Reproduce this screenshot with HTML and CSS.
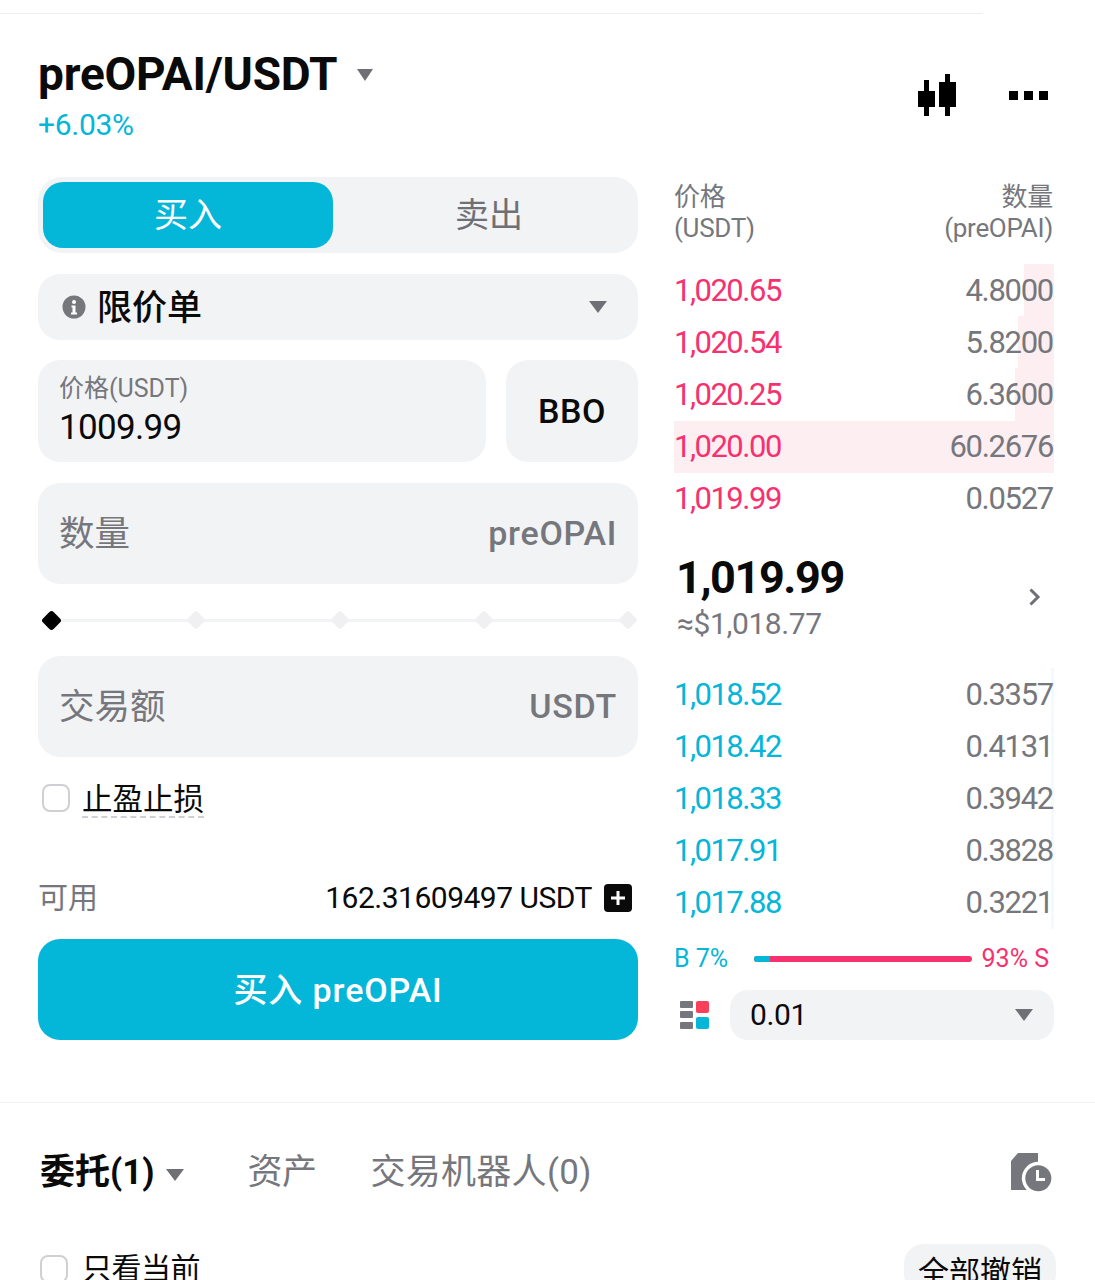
FILE: index.html
```html
<!DOCTYPE html>
<html lang="zh-CN">
<head>
<meta charset="utf-8">
<title>preOPAI/USDT</title>
<link rel="stylesheet" href="styles.css">
</head>
<body>
<div class="page">
  <div class="top-rule"></div>
  <header class="head">
    <div class="pair">
      <div class="pair-line">
        <h1 class="pair-name">preOPAI/USDT</h1>
        <span class="caret caret-title"></span>
      </div>
      <div class="change">+6.03%</div>
    </div>
    <div class="head-icons">
      <svg class="candle" width="38" height="44" viewBox="0 0 38 44"><path d="M6 7h5v11h6v16h-6v9H6v-9H0V18h6zM27 1h5v8h6v25h-6v9h-5v-9h-6V9h6z" fill="#000"/></svg>
      <svg class="dots" width="40" height="9" viewBox="0 0 40 9"><path d="M0 0h9v9H0zM15 0h9v9h-9zM30 0h9v9h-9z" fill="#000"/></svg>
    </div>
  </header>

  <main class="trade">
    <section class="form">
      <div class="tabs">
        <div class="tab tab-on">买入</div>
        <div class="tab tab-off">卖出</div>
      </div>
      <div class="order-type">
        <svg class="info" width="24" height="24" viewBox="0 0 24 24"><circle cx="12" cy="12" r="11.500" fill="#76777c"/><circle cx="12" cy="7" r="2" fill="#fff"/><path d="M9.500 10.500h4v7h1.500v2h-6v-2h1.500v-5h-1z" fill="#fff"/></svg>
        <span class="order-label">限价单</span>
        <span class="caret caret-order"></span>
      </div>
      <div class="price-row">
        <div class="price-field">
          <div class="price-label">价格(USDT)</div>
          <div class="price-value">1009.99</div>
        </div>
        <div class="bbo">BBO</div>
      </div>
      <div class="input-field"><span class="field-name">数量</span><span class="unit">preOPAI</span></div>
      <div class="slider">
        <span class="knob knob-on"></span>
        <span class="knob"></span>
        <span class="knob"></span>
        <span class="knob"></span>
        <span class="knob"></span>
      </div>
      <div class="input-field"><span class="field-name">交易额</span><span class="unit">USDT</span></div>
      <label class="tpsl"><span class="check"></span><span class="tpsl-text">止盈止损</span></label>
      <div class="avail">
        <span class="avail-label">可用</span>
        <span class="avail-value">162.31609497 USDT</span>
        <svg class="plus" width="28" height="28" viewBox="0 0 28 28"><rect width="28" height="28" rx="4" fill="#0a0a0a"/><path d="M12.500 7h3v5.500H21v3h-5.500V21h-3v-5.500H7v-3h5.500z" fill="#fff"/></svg>
      </div>
      <button class="buy">买入 preOPAI</button>
    </section>

    <section class="book">
      <div class="book-head">
        <div>价格<br>(USDT)</div>
        <div class="book-head-r">数量<br>(preOPAI)</div>
      </div>
      <div class="rows asks">
        <div class="row"><i class="depth depth-ask" style="width:30px"></i><span class="p ask">1,020.65</span><span class="q">4.8000</span></div>
        <div class="row"><i class="depth depth-ask" style="width:36px"></i><span class="p ask">1,020.54</span><span class="q">5.8200</span></div>
        <div class="row"><i class="depth depth-ask" style="width:39px"></i><span class="p ask">1,020.25</span><span class="q">6.3600</span></div>
        <div class="row"><i class="depth depth-ask" style="width:380px"></i><span class="p ask">1,020.00</span><span class="q">60.2676</span></div>
        <div class="row"><span class="p ask">1,019.99</span><span class="q">0.0527</span></div>
      </div>
      <div class="mid">
        <div>
          <div class="last">1,019.99</div>
          <div class="usd">≈$1,018.77</div>
        </div>
        <svg class="chev" width="13" height="20" viewBox="0 0 13 20"><path d="M2.500 2.500 10 10l-7.500 7.500" fill="none" stroke="#6f7075" stroke-width="3"/></svg>
      </div>
      <div class="rows bids">
        <div class="row"><i class="depth depth-bid" style="width:3px"></i><span class="p bid">1,018.52</span><span class="q">0.3357</span></div>
        <div class="row"><i class="depth depth-bid" style="width:3px"></i><span class="p bid">1,018.42</span><span class="q">0.4131</span></div>
        <div class="row"><i class="depth depth-bid" style="width:3px"></i><span class="p bid">1,018.33</span><span class="q">0.3942</span></div>
        <div class="row"><i class="depth depth-bid" style="width:3px"></i><span class="p bid">1,017.91</span><span class="q">0.3828</span></div>
        <div class="row"><i class="depth depth-bid" style="width:3px"></i><span class="p bid">1,017.88</span><span class="q">0.3221</span></div>
      </div>
      <div class="ratio">
        <span class="bid">B 7%</span>
        <div class="ratio-bar"><span class="ratio-b"></span></div>
        <span class="ask">93% S</span>
      </div>
      <div class="depth-ctl">
        <svg class="layout" width="30" height="28" viewBox="0 0 30 28"><g fill="#76777c"><rect x="0" y="0" width="13" height="7" rx="1"/><rect x="0" y="10" width="13" height="7" rx="1"/><rect x="0" y="21" width="13" height="7" rx="1"/></g><rect x="16" y="0" width="13" height="12" rx="2" fill="#f8405a"/><rect x="16" y="16" width="13" height="12" rx="2" fill="#04b6d8"/></svg>
        <div class="step"><span>0.01</span><span class="caret caret-step"></span></div>
      </div>
    </section>
  </main>

  <div class="divider"></div>

  <nav class="orders-tabs">
    <span class="otab otab-on">委托(1)</span>
    <span class="caret caret-tab"></span>
    <span class="otab otab-assets">资产</span>
    <span class="otab otab-bots">交易机器人(0)</span>
    <svg class="history" width="42" height="40" viewBox="0 0 42 40"><path d="M1 8 8 0h20v37H1z" fill="#76777c"/><circle cx="28.300" cy="25.300" r="16.500" fill="#fff"/><circle cx="28.300" cy="25.300" r="13" fill="#76777c"/><path d="M26 17h3v8h6v3h-9z" fill="#fff"/></svg>
  </nav>

  <div class="filter">
    <label class="only"><span class="check"></span><span>只看当前</span></label>
    <button class="cancel">全部撤销</button>
  </div>
</div>
</body>
</html>
```

FILE: styles.css
```css
* { box-sizing: border-box; }
html, body { margin: 0; padding: 0; background: #fff; }
body {
  height: 1280px;
  overflow: hidden;
  color: #0a0a0a;
  font-family: Roboto, "Noto Sans CJK SC", sans-serif;
}
.page { width: 1095px; height: 1280px; overflow: hidden; }
.top-rule { width: 983px; height: 1px; margin-top: 13px; background: #efefef; }

.head { display: flex; justify-content: space-between; height: 163px; padding: 33px 46px 0 38px; }
.pair-line { display: flex; align-items: center; gap: 20px; height: 54px; }
.pair-name { margin: 0; font-size: 46px; line-height: 54px; font-weight: 700; letter-spacing: -.2px; }
.change { margin-top: 6px; font-size: 30px; line-height: 36px; color: #04b6d8; letter-spacing: -.3px; }
.head-icons { display: flex; align-items: flex-end; gap: 53px; height: 70px; padding-top: 26px; }
.head-icons .dots { margin-bottom: 17px; }

.caret { display: block; width: 0; height: 0; border-left: 9px solid transparent; border-right: 9px solid transparent; border-top: 12px solid #6f7075; }
.caret-title { margin-top: 2px; border-left-width: 8px; border-right-width: 8px; }

.trade { display: flex; gap: 36px; padding-left: 38px; }
.form { width: 600px; }

.tabs { display: flex; height: 76px; padding: 5px; background: #f2f3f5; border-radius: 24px; }
.tab { display: flex; align-items: center; justify-content: center; padding-bottom: 6px; font-size: 34px; color: #6f7075; border-radius: 20px; }
.tab-on { flex: 0 0 290px; background: #04b6d8; color: #fff; }
.tab-off { flex: 1; padding-left: 12px; }

.order-type { display: flex; align-items: center; height: 66px; margin-top: 21px; padding: 0 31px 0 24px; background: #f2f3f5; border-radius: 22px; }
.order-label { margin: 0 0 6px 11px; font-size: 35px; font-weight: 500; color: #0a0a0a; }
.caret-order { margin-left: auto; }

.price-row { display: flex; gap: 20px; margin-top: 20px; height: 102px; }
.price-field { width: 448px; padding: 13px 21px 0; background: #f2f3f5; border-radius: 22px; }
.price-label { font-size: 25px; line-height: 32px; color: #76777c; letter-spacing: 0; }
.price-value { font-size: 35px; line-height: 46px; letter-spacing: -.7px; }
.bbo { flex: 1; display: flex; align-items: center; justify-content: center; font-size: 34px; font-weight: 500; letter-spacing: .5px; background: #f2f3f5; border-radius: 22px; }

.input-field { display: flex; align-items: center; justify-content: space-between; height: 101px; margin-top: 21px; padding: 0 21px; background: #f2f3f5; border-radius: 22px; color: #76777c; font-size: 35.500px; }
.field-name { margin-bottom: 6px; }
.unit { margin-bottom: 2px; font-size: 34px; font-weight: 500; letter-spacing: .7px; }
.slider + .input-field { margin-top: 0; }

.slider { position: relative; display: flex; justify-content: space-between; align-items: center; height: 72px; padding: 0 3px 0 6px; }
.slider::before { content: ""; position: absolute; left: 12px; right: 8px; top: 35px; height: 3px; background: #f2f3f5; }
.knob { position: relative; width: 14px; height: 14px; background: #f0f0f2; border-radius: 3px; transform: rotate(45deg); }
.knob-on { width: 15px; height: 15px; background: #000; }

.tpsl { display: flex; align-items: center; gap: 12px; height: 40px; margin: 21px 0 0 4px; }
.check { display: block; flex: none; width: 28px; height: 28px; border: 2px solid #cfd0d3; border-radius: 8px; background: #fff; }
.tpsl-text { padding-top: 4px; font-size: 30.500px; line-height: 33px; border-bottom: 2px dashed #cfd0d3; }

.avail { display: flex; align-items: center; height: 40px; margin-top: 60px; }
.avail-label { margin-bottom: 6px; font-size: 30px; color: #76777c; }
.avail-value { margin: 0 0 2px auto; font-size: 30px; letter-spacing: -.5px; }
.plus { margin: 0 6px 0 12px; }

.buy { display: block; width: 100%; height: 101px; margin-top: 21px; padding: 0 0 4px; border: 0; background: #04b6d8; color: #fff; border-radius: 22px; font-family: inherit; font-size: 34px; font-weight: 500; letter-spacing: .9px; }

.book { width: 380px; }
.book-head { display: flex; justify-content: space-between; height: 87px; padding: 5px 1px 0 0; color: #76777c; font-size: 26px; line-height: 31px; letter-spacing: -.3px; }
.book-head-r { text-align: right; }

.row { position: relative; display: flex; justify-content: space-between; align-items: center; height: 52.200px; padding: 0 1px 0 0; font-size: 31px; letter-spacing: -1.500px; }
.p, .q { position: relative; }
.q { color: #76777c; letter-spacing: -1.300px; }
.ask { color: #f7316f; }
.bid { color: #04b6d8; }
.depth { position: absolute; top: 0; bottom: 0; right: 0; }
.depth-ask { background: #fdeef2; }
.depth-bid { background: #f1fafd; }

.mid { display: flex; align-items: center; justify-content: space-between; height: 143px; padding: 4px 13px 0 2px; }
.last { font-size: 45px; line-height: 50px; font-weight: 700; letter-spacing: -1.400px; }
.usd { margin-top: 2px; padding-left: 1px; font-size: 30px; line-height: 38px; letter-spacing: -.4px; color: #76777c; }
.chev { margin-top: -2px; }

.ratio { display: flex; align-items: center; height: 32px; margin-top: 14px; padding: 0 5px 0 0; font-size: 25px; white-space: nowrap; }
.ratio-bar { width: 218px; height: 6px; margin: 0 10px 0 auto; border-radius: 3px; background: #f7316f; }
.ratio-b { display: block; width: 16px; height: 6px; border-radius: 3px 0 0 3px; background: #04b6d8; }

.depth-ctl { display: flex; align-items: center; height: 50px; margin-top: 15px; padding-left: 6px; }
.step { display: flex; align-items: center; justify-content: space-between; width: 324px; height: 50px; margin-left: 20px; padding: 0 21px 0 20px; background: #f2f3f5; border-radius: 18px; font-size: 30px; letter-spacing: -.4px; }

.divider { height: 1px; margin-top: 62px; background: #f1f1f1; }

.orders-tabs { display: flex; align-items: center; height: 60px; margin-top: 39px; padding: 0 43px 0 40px; font-size: 35px; color: #76777c; }
.otab { padding-bottom: 8px; letter-spacing: -.6px; }
.otab-on { color: #0a0a0a; font-weight: 700; letter-spacing: 0; }
.otab-bots { letter-spacing: .3px; }
.caret-tab { margin: 6px 0 0 11px; }
.otab-assets { margin: 0 54px 0 64px; }
.history { margin: 2px 0 0 auto; }

.filter { display: flex; align-items: flex-start; justify-content: space-between; padding: 42px 39px 0 40px; }
.only { display: flex; align-items: center; gap: 14px; margin-top: 11px; font-size: 30px; line-height: 28px; letter-spacing: -.5px; }
.cancel { width: 152px; height: 50px; padding: 0; border: 0; background: #f2f3f5; border-radius: 20px; font-family: inherit; font-size: 31px; color: #0a0a0a; }
```
